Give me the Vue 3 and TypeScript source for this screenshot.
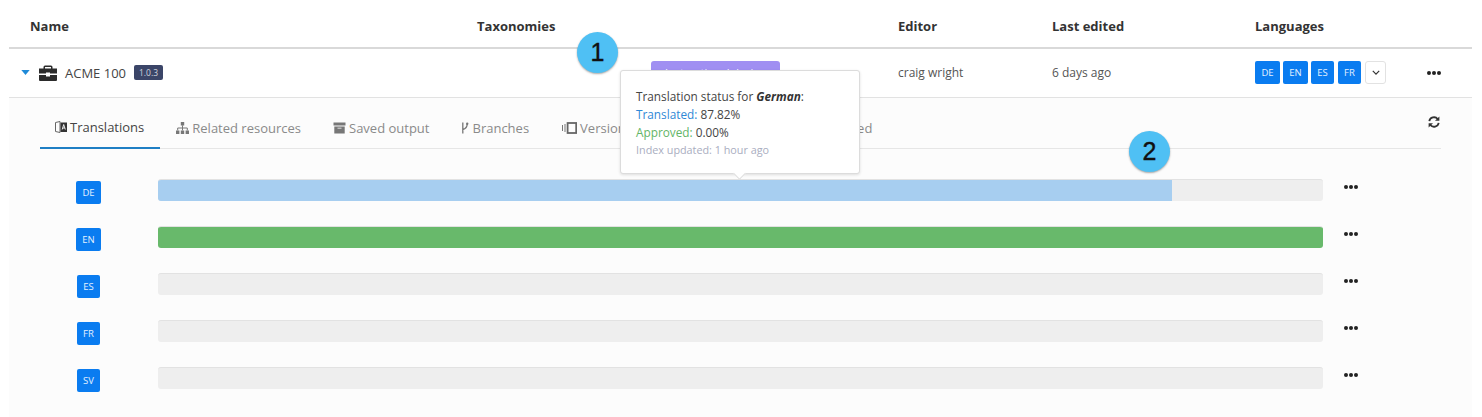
<script setup lang="ts">
interface Tab { label: string; icon: string; active?: boolean }
interface Row { code: string; translated: number; approved: number; narrow: boolean }

const columns: string[] = ['Name', 'Taxonomies', 'Editor', 'Last edited', 'Languages']
const rowLangs: string[] = ['DE', 'EN', 'ES', 'FR']
const tabs: Tab[] = [
  { label: 'Translations', icon: 'book', active: true },
  { label: 'Related resources', icon: 'sitemap' },
  { label: 'Saved output', icon: 'archive' },
  { label: 'Branches', icon: 'branch' },
  { label: 'Versions', icon: 'versions' },
  { label: 'Reviews', icon: 'archive' },
  { label: 'Published', icon: 'archive' },
]
const rows: Row[] = [
  { code: 'DE', translated: 87.05, approved: 0, narrow: false },
  { code: 'EN', translated: 0, approved: 100, narrow: false },
  { code: 'ES', translated: 0, approved: 0, narrow: true },
  { code: 'FR', translated: 0, approved: 0, narrow: true },
  { code: 'SV', translated: 0, approved: 0, narrow: true },
]
</script>

<template>
  <div class="page">
    <div class="grid head">
      <div v-for="c in columns" :key="c" class="hcell">{{ c }}</div>
    </div>

    <div class="grid item">
      <div class="name">
        <svg class="caret" viewBox="0 0 10 6" width="9" height="5"><path d="M0 0h10L5 6z" fill="#1f8ad8" /></svg>
        <svg class="case" viewBox="0 0 18 16" width="18" height="16">
          <path d="M6 0.5h6a1.5 1.5 0 0 1 1.5 1.5v1.5H18v5H11v-1H7v1H0v-5h4.5V2A1.5 1.5 0 0 1 6 0.5zM6 2v1.5h6V2z" fill="#2b2b2b" fill-rule="evenodd" />
          <path d="M0 10h7v1.5h4V10h7v5a1 1 0 0 1-1 1H1a1 1 0 0 1-1-1z" fill="#2b2b2b" />
        </svg>
        <span class="title">ACME 100</span>
        <span class="version">1.0.3</span>
      </div>
      <div class="tax"><span class="pill">Instructional design</span></div>
      <div class="cell">craig wright</div>
      <div class="cell">6 days ago</div>
      <div class="langs">
        <span v-for="l in rowLangs" :key="l" class="badge" :class="{ small: l === 'ES' || l === 'FR' }">{{ l }}</span>
        <span class="drop">
          <svg viewBox="0 0 10 6" width="8" height="5"><path d="M1 1l4 4 4-4" fill="none" stroke="#333" stroke-width="1.5" /></svg>
        </span>
        <span class="more row-more"><i /><i /><i /></span>
      </div>
    </div>

    <section class="panel">
      <div class="tabbar">
        <nav class="tabs">
          <div v-for="t in tabs" :key="t.label" class="tab" :class="{ active: t.active }">
            <svg v-if="t.icon === 'book'" viewBox="0 0 12 12" width="12" height="12">
              <path d="M0.5 1.5L5 0.5v11l-4.5-1z" fill="none" stroke="#666" stroke-width="1" />
              <path d="M5.5 1.5H12v9.5H5.5z" fill="#333" />
              <path d="M7.2 8.5L8.7 3.5l1.6 5M7.8 7h1.8" fill="none" stroke="#fff" stroke-width=".9" />
            </svg>
            <svg v-else-if="t.icon === 'sitemap'" viewBox="0 0 13 12" width="13" height="12">
              <path d="M4.8 0h3.4v3.4H4.8zM0 8.4h3.4V12H0zM4.8 8.4h3.4V12H4.8zM9.6 8.4H13V12H9.6z" fill="#777" />
              <path d="M6.5 3.4v5M1.7 8.4V6h9.6v2.4" fill="none" stroke="#777" stroke-width="1" />
            </svg>
            <svg v-else-if="t.icon === 'archive'" viewBox="0 0 12 12" width="13" height="12">
              <path d="M0 0.5h12v3H0zM0.8 4.5h10.4v7H0.8z" fill="#777" />
              <path d="M4 6.2h4" stroke="#ddd" stroke-width="1" />
            </svg>
            <svg v-else-if="t.icon === 'branch'" class="ico-branch" viewBox="0 0 8 12" width="8" height="12">
              <path d="M1.8 0.5v11M1.8 7.5C5.5 6.5 6.2 5 6.2 2" fill="none" stroke="#777" stroke-width="1.3" />
              <circle cx="6.2" cy="1.8" r="1.2" fill="#777" />
            </svg>
            <svg v-else class="ico-ver" viewBox="0 0 15 12" width="15" height="12">
              <path d="M0.5 3v6M3 2v8" fill="none" stroke="#777" stroke-width="1" />
              <rect x="5.6" y="1" width="8.6" height="10" fill="none" stroke="#666" stroke-width="1.8" />
            </svg>
            <span>{{ t.label }}</span>
          </div>
        </nav>
        <svg class="refresh" viewBox="0 0 12 12" width="12" height="12">
          <path d="M1.3 5.2A4.8 4.8 0 0 1 9.7 3" fill="none" stroke="#333" stroke-width="1.8" />
          <path d="M11.4 0.4v4.4H7z" fill="#333" />
          <path d="M10.7 6.8A4.8 4.8 0 0 1 2.3 9" fill="none" stroke="#333" stroke-width="1.8" />
          <path d="M0.6 11.6V7.2H5z" fill="#333" />
        </svg>
      </div>

      <div class="bars">
        <div v-for="r in rows" :key="r.code" class="bar-row">
          <div class="code"><span class="badge" :class="{ small: r.narrow }">{{ r.code }}</span></div>
          <div class="track">
            <div v-if="r.translated" class="fill blue" :style="{ width: r.translated + '%' }" />
            <div v-if="r.approved" class="fill green" :style="{ width: r.approved + '%' }" />
          </div>
          <span class="more"><i /><i /><i /></span>
        </div>
      </div>
    </section>

    <div class="tooltip">
      <div>Translation status for <b>German</b>:</div>
      <div><span class="t-blue">Translated:</span> 87.82%</div>
      <div><span class="t-green">Approved:</span> 0.00%</div>
      <div class="t-muted">Index updated: 1 hour ago</div>
    </div>

    <div class="callout one">1</div>
    <div class="callout two">2</div>
  </div>
</template>

<style scoped>
.page {
  position: relative;
  width: 1482px;
  height: 417px;
  overflow: hidden;
  background: #fff;
  font-family: "Open Sans", "Noto Sans", sans-serif;
  color: #444;
  font-size: 12px;
}
.grid {
  display: grid;
  grid-template-columns: 468px 421px 154px 203px 217px;
  width: 1463px;
  margin-left: 9px;
  box-sizing: border-box;
}
.head {
  height: 49px;
  border-bottom: 2px solid #d9d9d9;
  align-items: center;
  padding-top: 5px;
}
.hcell {
  font-weight: 700;
  font-size: 13px;
  color: #333;
}
.hcell:first-child { padding-left: 21px; }
.item {
  height: 49px;
  border-bottom: 1px solid #e2e2e2;
  align-items: center;
  padding-bottom: 1px;
}
.name {
  display: flex;
  align-items: center;
  padding-left: 12px;
}
.caret { margin-right: 9px; }
.case { margin-right: 8px; }
.title { font-size: 13px; color: #444; }
.version {
  margin-left: 8px;
  background: #3b4568;
  color: #d0d4de;
  font-size: 8.5px;
  line-height: 15px;
  height: 15px;
  width: 29px;
  text-align: center;
  border-radius: 2px;
}
.tax { padding-left: 174px; display: flex; }
.pill {
  display: block;
  width: 129px;
  height: 24px;
  line-height: 24px;
  background: #a08ff2;
  color: #fff;
  font-size: 11px;
  text-align: center;
  border-radius: 3px;
  white-space: nowrap;
  overflow: hidden;
}
.cell { color: #555; }
.langs {
  display: flex;
  align-items: center;
  gap: 3px;
}
.badge {
  display: block;
  box-sizing: border-box;
  width: 25px;
  height: 23px;
  line-height: 23px;
  text-align: center;
  font-size: 9.5px;
  color: #e4f1ff;
  background: #0a7cf0;
  border-radius: 2px;
}
.badge.small { width: 23px; }
.langs .badge.small:nth-child(4) { margin-left: 1px; }
.drop {
  width: 21px;
  height: 23px;
  box-sizing: border-box;
  margin-left: 1px;
  border: 1px solid #e2e2e2;
  border-radius: 3px;
  display: flex;
  align-items: center;
  justify-content: center;
  background: #fff;
}
.more {
  display: flex;
  gap: 1px;
  width: 14px;
}
.more i {
  display: block;
  width: 4px;
  height: 4px;
  border-radius: 50%;
  background: #222;
}
.row-more { margin-left: 38px; }
.panel {
  width: 1463px;
  height: 319px;
  margin-left: 9px;
  background: #fcfcfc;
  box-sizing: border-box;
  padding: 0 31px;
}
.tabbar { position: relative; }
.tabs {
  display: flex;
  height: 51px;
  box-sizing: border-box;
  border-bottom: 1px solid #e6e6e6;
}
.tab {
  display: flex;
  align-items: center;
  gap: 3px;
  height: 50px;
  box-sizing: border-box;
  padding: 10px 16px 0 15px;
  font-size: 13px;
  color: #8a8a8a;
  white-space: nowrap;
}
.tab + .tab { padding-left: 16px; padding-right: 16px; }
.tab:nth-child(4) { padding-right: 17px; }
.tab:nth-child(5) { padding-right: 36px; }
.tab:nth-child(6) { padding-right: 32px; }
.tab.active {
  color: #444;
  height: 51px;
  padding-top: 10px;
  padding-bottom: 1px;
  border-bottom: 2px solid #1f7fc4;
}
.refresh {
  position: absolute;
  top: 18px;
  right: 1px;
}
.bars {
  display: flex;
  flex-direction: column;
  gap: 25px;
  padding-top: 30px;
}
.bar-row {
  display: flex;
  align-items: flex-start;
  height: 22px;
}
.code {
  width: 97px;
  margin-right: 21px;
  flex: none;
  display: flex;
  justify-content: center;
  padding-top: 2px;
  box-sizing: border-box;
}
.track {
  width: 1165px;
  height: 22px;
  flex: none;
  background: #eeeeee;
  border-top: 1px solid #e2e2e2;
  box-sizing: border-box;
  border-radius: 3px;
  overflow: hidden;
  display: flex;
}
.fill { height: 22px; margin-top: -1px; }
.blue { background: #a7cef0; }
.green { background: #68b96b; }
.bar-row .more { margin: 6px 0 0 21px; }
.tooltip {
  position: absolute;
  left: 620px;
  top: 70px;
  width: 240px;
  height: 104px;
  box-sizing: border-box;
  padding: 16px 15px 0;
  background: #fff;
  border: 1px solid #dcdcdc;
  border-radius: 3px;
  box-shadow: 0 1px 3px rgba(0, 0, 0, 0.12);
  font-size: 11.8px;
  line-height: 18px;
  color: #444;
}
.tooltip::after {
  content: "";
  position: absolute;
  left: 114px;
  bottom: -5px;
  width: 8px;
  height: 8px;
  background: #fff;
  transform: rotate(45deg);
  border-right: 1px solid #dcdcdc;
  border-bottom: 1px solid #dcdcdc;
}
.tooltip b { font-style: italic; font-weight: 700; color: #333; }
.t-blue { color: #2f88d6; }
.t-green { color: #63b567; }
.t-muted { color: #a9adc0; font-size: 10.8px; }
.callout {
  position: absolute;
  width: 41px;
  height: 41px;
  border-radius: 50%;
  background: #4fc0f4;
  box-shadow: 0 1px 2px rgba(0, 0, 0, 0.35);
  display: flex;
  align-items: center;
  justify-content: center;
  font-family: "Liberation Sans", sans-serif;
  font-size: 25px;
  -webkit-text-stroke: 0.4px #111;
  color: #111;
}
.one { left: 577px; top: 32px; }
.two { left: 1129px; top: 131px; }
</style>
